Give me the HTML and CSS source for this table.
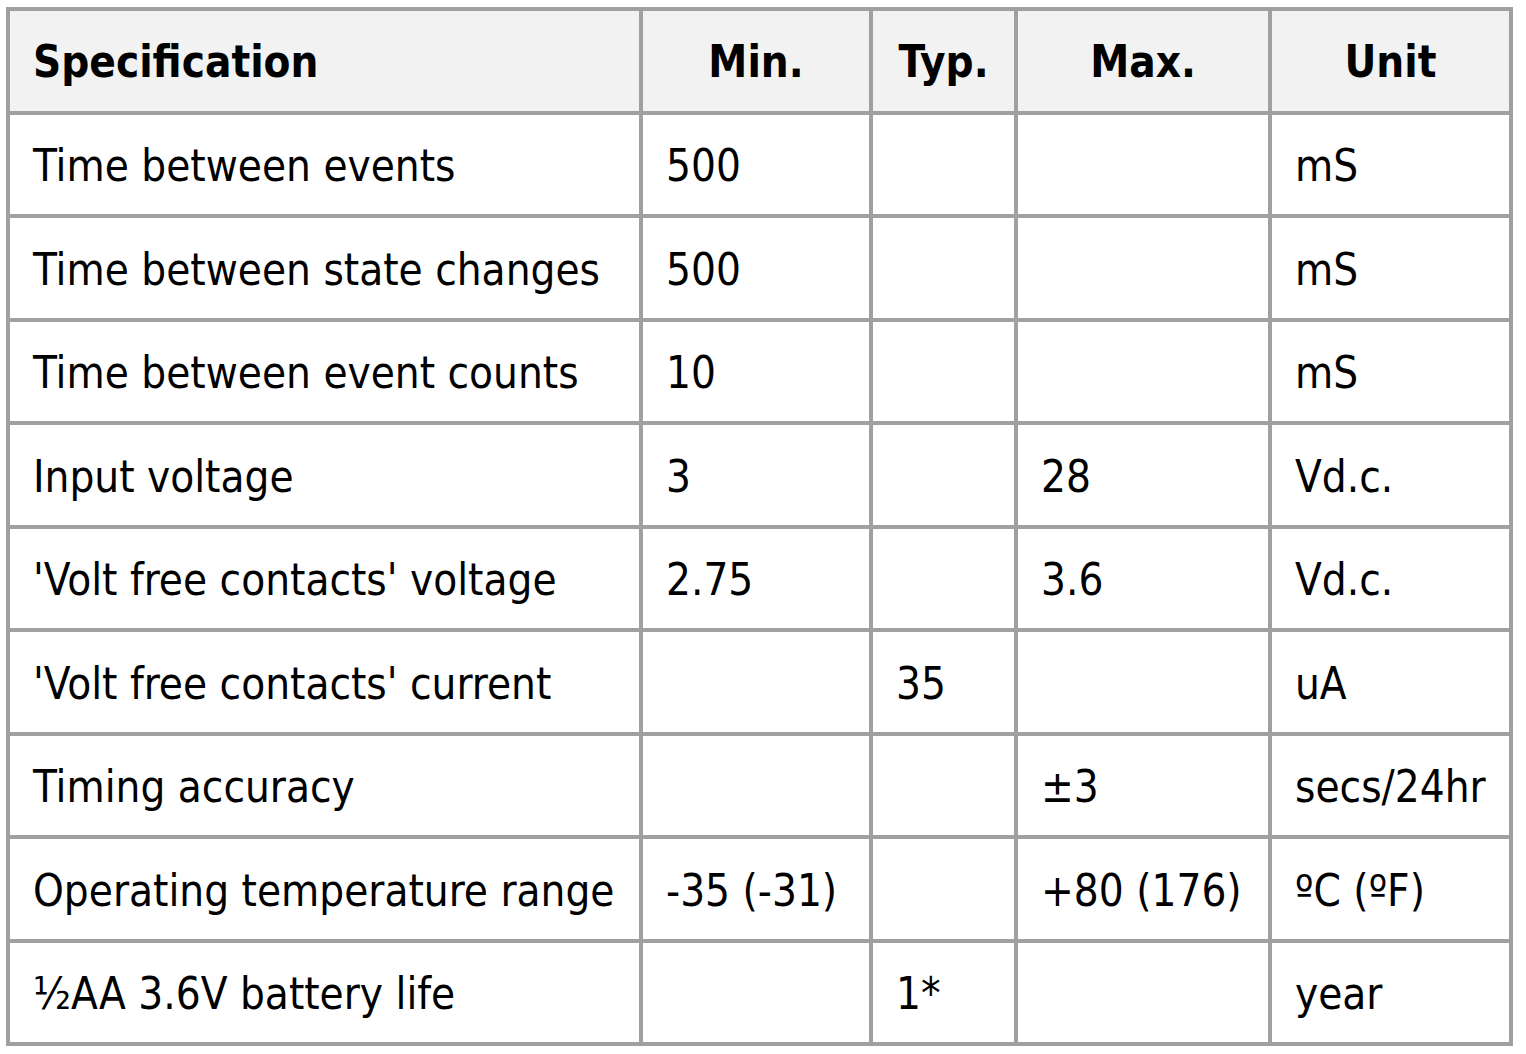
FILE: index.html
```html
<!DOCTYPE html>
<html>
<head>
<meta charset="utf-8">
<link rel="stylesheet" href="styles.css">
</head>
<body>
<table class="spec">
  <colgroup>
    <col class="c1"><col class="c2"><col class="c3"><col class="c4"><col class="c5">
  </colgroup>
  <thead>
    <tr><th class="first">Specification</th><th>Min.</th><th>Typ.</th><th>Max.</th><th>Unit</th></tr>
  </thead>
  <tbody>
    <tr><td>Time between events</td><td>500</td><td></td><td></td><td>mS</td></tr>
    <tr><td>Time between state changes</td><td>500</td><td></td><td></td><td>mS</td></tr>
    <tr><td>Time between event counts</td><td>10</td><td></td><td></td><td>mS</td></tr>
    <tr><td>Input voltage</td><td>3</td><td></td><td>28</td><td>Vd.c.</td></tr>
    <tr><td>'Volt free contacts' voltage</td><td>2.75</td><td></td><td>3.6</td><td>Vd.c.</td></tr>
    <tr><td>'Volt free contacts' current</td><td></td><td>35</td><td></td><td>uA</td></tr>
    <tr><td>Timing accuracy</td><td></td><td></td><td>±3</td><td>secs/24hr</td></tr>
    <tr><td>Operating temperature range</td><td>-35 (-31)</td><td></td><td>+80 (176)</td><td>ºC (ºF)</td></tr>
    <tr><td>½AA 3.6V battery life</td><td></td><td>1*</td><td></td><td>year</td></tr>
  </tbody>
</table>
</body>
</html>
```
FILE: styles.css
```css
html, body {
  margin: 0;
  padding: 0;
  background: #ffffff;
}
body {
  padding: 7px 0 0 6px;
}
.spec {
  border-collapse: collapse;
  table-layout: fixed;
  width: 1507px;
  font-family: "DejaVu Sans Condensed", "DejaVu Sans", sans-serif;
  font-stretch: semi-condensed;
  font-size: 43.6px;
  color: #000000;
}
.c1 { width: 633px; }
.c2 { width: 230px; }
.c3 { width: 145px; }
.c4 { width: 254px; }
.c5 { width: 241px; }
.spec th,
.spec td {
  border: 4px solid #a0a0a0;
  height: 93.5px;
  padding: 6px 10px 0 23px;
  vertical-align: middle;
  white-space: nowrap;
  line-height: 1;
}
.spec th {
  background: #f2f2f2;
  font-weight: bold;
  text-align: center;
  padding: 5px 10px 0 10px;
  height: 94.5px;
}
.spec th.first {
  text-align: left;
  padding-left: 23px;
}
.spec td {
  text-align: left;
}
```
